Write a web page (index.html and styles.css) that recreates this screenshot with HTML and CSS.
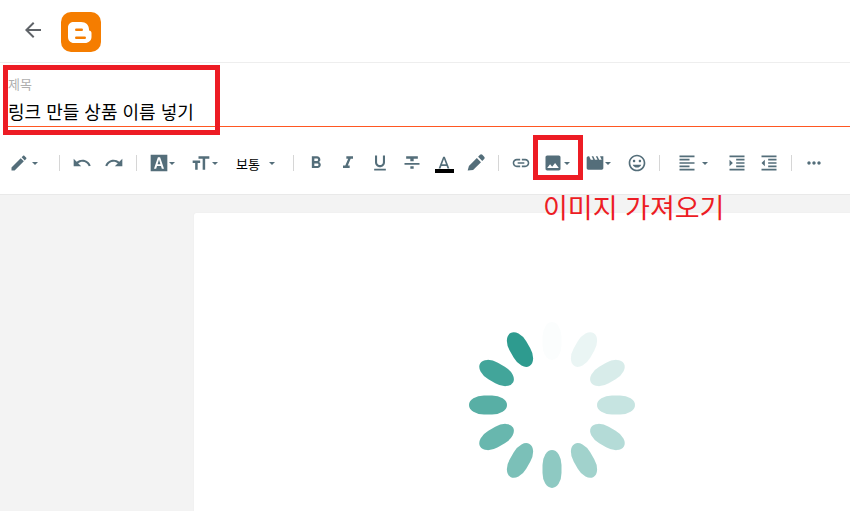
FILE: index.html
```html
<!DOCTYPE html>
<html lang="ko">
<head>
    <meta charset="UTF-8">
    <title>Blogger</title>
    <link rel="stylesheet" href="styles.css">
</head>
<body>
    <div class="header">
        <svg class="back" viewBox="0 0 24 24"><path d="M20 11H7.83l5.59-5.59L12 4l-8 8 8 8 1.41-1.41L7.83 13H20v-2z"/></svg>
        <svg class="logo" viewBox="0 0 40 40">
            <rect width="40" height="40" rx="10" fill="#f57d00"/>
            <path d="M14 10h6c5 0 8 3 8 7.500v1c1.500 0 2.500 1 2.500 2.500v4c0 3.500-3 6-6.500 6h-11c-3.500 0-6-2.500-6-6v-9.500c0-3.500 2.500-5.500 6-5.500z" fill="#fff"/>
            <rect x="14" y="16.500" width="8" height="2.500" rx="1.250" fill="#f57d00"/>
            <rect x="14" y="24.500" width="11" height="2.500" rx="1.250" fill="#f57d00"/>
        </svg>
    </div>

    <div class="title-box">
        <div class="title-label">제목</div>
        <div class="title-text">링크 만들 상품 이름 넣기</div>
    </div>

    <div class="toolbar">
        <span class="btn btn-pencil"><svg viewBox="0 0 24 24"><path d="M3 17.250V21h3.750L17.810 9.940l-3.750-3.750L3 17.250zM20.710 7.040c.39-.39.39-1.020 0-1.410l-2.340-2.340c-.39-.39-1.020-.39-1.410 0l-1.830 1.830 3.750 3.750 1.830-1.830z"/></svg><i class="caret"></i></span>
        <span class="sep"></span>
        <span class="btn"><svg viewBox="0 0 24 24"><path d="M12.500 8c-2.650 0-5.050.99-6.900 2.600L2 7v9h9l-3.620-3.620c1.390-1.160 3.160-1.880 5.120-1.880 3.540 0 6.550 2.310 7.600 5.500l2.370-.78C21.080 11.030 17.150 8 12.500 8z"/></svg></span>
        <span class="btn"><svg viewBox="0 0 24 24"><path d="M18.400 10.600C16.550 8.990 14.150 8 11.500 8c-4.650 0-8.580 3.030-9.960 7.220L3.900 16c1.050-3.190 4.050-5.500 7.600-5.500 1.950 0 3.730.72 5.120 1.880L13 16h9V7l-3.600 3.600z"/></svg></span>
        <span class="sep"></span>
        <span class="btn btn-back"><svg viewBox="0 0 24 24"><path fill-rule="evenodd" d="M2 2h20v20H2zM10.700 5 6 19h2.600l1-3.300h4.800l1 3.300H18L13.300 5zM10.300 13.500h3.400L12 7.900z"/></svg><i class="caret"></i></span>
        <span class="btn btn-fsize"><svg viewBox="0 0 24 24"><path d="M9 4h13v3h-5v13h-3V7H9zM2 9h9v3H8v8H5v-8H2z"/></svg><i class="caret"></i></span>
        <span class="btn size-select">보통<i class="caret"></i></span>
        <span class="sep"></span>
        <span class="btn"><svg viewBox="0 0 24 24"><path d="M15.600 10.790c.97-.67 1.650-1.770 1.650-2.790 0-2.260-1.750-4-4-4H7v14h7.040c2.090 0 3.710-1.700 3.710-3.790 0-1.520-.86-2.820-2.150-3.420zM10 6.500h3c.83 0 1.500.67 1.500 1.500s-.67 1.500-1.500 1.500h-3v-3zm3.500 9H10v-3h3.500c.83 0 1.500.67 1.500 1.500s-.67 1.500-1.500 1.500z"/></svg></span>
        <span class="btn"><svg viewBox="0 0 24 24"><path d="M10 4v3h2.210l-3.420 8H6v3h8v-3h-2.210l3.420-8H18V4z"/></svg></span>
        <span class="btn"><svg viewBox="0 0 24 24"><path d="M12 17c3.310 0 6-2.690 6-6V3h-2.500v8c0 1.930-1.570 3.500-3.500 3.500S8.500 12.930 8.500 11V3H6v8c0 3.310 2.690 6 6 6zm-7 2v2h14v-2H5z"/></svg></span>
        <span class="btn"><svg viewBox="0 0 24 24"><path d="M10 19h4v-3h-4v3zM5 4v3h5v3h4V7h5V4H5zM3 14h18v-2H3v2z"/></svg></span>
        <span class="btn color-a"><svg viewBox="0 0 24 24"><path d="M11 1 5.500 15h2.250l1.120-3h6.250l1.120 3h2.250L13 1h-2zm-1.380 9L12 3.670 14.380 10H9.620z"/></svg><i class="color-bar"></i></span>
        <span class="btn"><svg viewBox="0 0 24 24"><path d="M2 21l1.500-5.500 9.500-9.500 5 5-9.500 9.500zM14.500 4.500l2.300-2.300c.8-.8 2-.8 2.800 0l2.200 2.200c.8.8.8 2 0 2.800L19.500 9.500z"/></svg></span>
        <span class="sep"></span>
        <span class="btn"><svg viewBox="0 0 24 24"><path d="M3.900 12c0-1.710 1.390-3.100 3.100-3.100h4V7H7c-2.760 0-5 2.240-5 5s2.240 5 5 5h4v-1.900H7c-1.710 0-3.100-1.390-3.100-3.100zM8 13h8v-2H8v2zm9-6h-4v1.900h4c1.710 0 3.100 1.390 3.100 3.100s-1.390 3.100-3.100 3.100h-4V17h4c2.760 0 5-2.240 5-5s-2.240-5-5-5z"/></svg></span>
        <span class="btn btn-image"><svg viewBox="0 0 24 24"><path d="M21 19V5c0-1.100-.9-2-2-2H5c-1.100 0-2 .9-2 2v14c0 1.100.9 2 2 2h14c1.100 0 2-.9 2-2zM8.500 13.500l2.500 3.010L14.500 12l4.500 6H5l3.500-4.500z"/></svg><i class="caret"></i></span>
        <span class="btn btn-video"><svg viewBox="0 0 24 24"><path d="M18 4l2 4h-3l-2-4h-2l2 4h-3l-2-4H8l2 4H7L5 4H4c-1.100 0-1.990.9-1.990 2L2 18c0 1.100.9 2 2 2h16c1.100 0 2-.9 2-2V4h-4z"/></svg><i class="caret"></i></span>
        <span class="btn"><svg viewBox="0 0 24 24"><path d="M11.990 2C6.470 2 2 6.480 2 12s4.470 10 9.990 10C17.520 22 22 17.520 22 12S17.520 2 11.990 2zM12 20c-4.420 0-8-3.580-8-8s3.580-8 8-8 8 3.580 8 8-3.580 8-8 8zm3.500-9c.83 0 1.500-.67 1.500-1.500S16.330 8 15.500 8 14 8.670 14 9.500s.67 1.500 1.500 1.500zm-7 0c.83 0 1.500-.67 1.500-1.500S9.330 8 8.500 8 7 8.670 7 9.500 7.670 11 8.500 11zm3.500 6.500c2.330 0 4.310-1.460 5.110-3.500H6.890c.8 2.040 2.780 3.500 5.110 3.500z"/></svg></span>
        <span class="sep"></span>
        <span class="btn btn-align"><svg viewBox="0 0 24 24"><path d="M15 15H3v2h12v-2zm0-8H3v2h12V7zM3 13h18v-2H3v2zm0 8h18v-2H3v2zM3 3v2h18V3H3z"/></svg><i class="caret"></i></span>
        <span class="btn"><svg viewBox="0 0 24 24"><path d="M3 21h18v-2H3v2zM3 8v8l4-4-4-4zm8 9h10v-2H11v2zM3 3v2h18V3H3zm8 6h10V7H11v2zm0 4h10v-2H11v2z"/></svg></span>
        <span class="btn"><svg viewBox="0 0 24 24"><path d="M11 17h10v-2H11v2zm-8-5l4 4V8l-4 4zm0 9h18v-2H3v2zM3 3v2h18V3H3zm8 6h10V7H11v2zm0 4h10v-2H11v2z"/></svg></span>
        <span class="sep"></span>
        <span class="btn"><svg viewBox="0 0 24 24"><path d="M6 10c-1.100 0-2 .9-2 2s.9 2 2 2 2-.9 2-2-.9-2-2-2zm12 0c-1.100 0-2 .9-2 2s.9 2 2 2 2-.9 2-2-.9-2-2-2zm-6 0c-1.100 0-2 .9-2 2s.9 2 2 2 2-.9 2-2-.9-2-2-2z"/></svg></span>
    </div>

    <div class="editor">
        <div class="page">
            <svg class="spinner" viewBox="-85 -85 170 170">
                <rect class="s0" x="-9.500" y="-83" width="19" height="38" rx="9.500" ry="15"/>
                <rect class="s1" x="-9.500" y="-83" width="19" height="38" rx="9.500" ry="15" transform="rotate(30)"/>
                <rect class="s2" x="-9.500" y="-83" width="19" height="38" rx="9.500" ry="15" transform="rotate(60)"/>
                <rect class="s3" x="-9.500" y="-83" width="19" height="38" rx="9.500" ry="15" transform="rotate(90)"/>
                <rect class="s4" x="-9.500" y="-83" width="19" height="38" rx="9.500" ry="15" transform="rotate(120)"/>
                <rect class="s5" x="-9.500" y="-83" width="19" height="38" rx="9.500" ry="15" transform="rotate(150)"/>
                <rect class="s6" x="-9.500" y="-83" width="19" height="38" rx="9.500" ry="15" transform="rotate(180)"/>
                <rect class="s7" x="-9.500" y="-83" width="19" height="38" rx="9.500" ry="15" transform="rotate(210)"/>
                <rect class="s8" x="-9.500" y="-83" width="19" height="38" rx="9.500" ry="15" transform="rotate(240)"/>
                <rect class="s9" x="-9.500" y="-83" width="19" height="38" rx="9.500" ry="15" transform="rotate(270)"/>
                <rect class="s10" x="-9.500" y="-83" width="19" height="38" rx="9.500" ry="15" transform="rotate(300)"/>
                <rect class="s11" x="-9.500" y="-83" width="19" height="38" rx="9.500" ry="15" transform="rotate(330)"/>
            </svg>
        </div>
    </div>

    <!-- annotations drawn on top of the screenshot -->
    <div class="mark mark-title"></div>
    <div class="mark mark-image"></div>
    <div class="note">이미지 가져오기</div>
</body>
</html>
```

FILE: styles.css
```css
* {
    margin: 0;
    padding: 0;
    box-sizing: border-box;
}
html, body {
    height: 100%;
    overflow: hidden;
}
body {
    position: relative;
    display: flex;
    flex-direction: column;
    font-family: "Noto Sans CJK KR", "Noto Sans", sans-serif;
    background: #fff;
    color: #000;
}
.header {
    height: 63px;
    flex: none;
    display: flex;
    align-items: center;
    padding-left: 21px;
    border-bottom: 1px solid #eee;
}
.back {
    width: 24px;
    height: 24px;
    margin-bottom: 2px;
    fill: #5f6368;
}
.logo {
    width: 40px;
    height: 40px;
    margin: 2px 0 0 16px;
}
.title-box {
    height: 64px;
    flex: none;
    margin-left: 8px;
    border-bottom: 1px solid #ff5722;
}
.title-label {
    padding-top: 12px;
    font-size: 13px;
    line-height: 18px;
    color: #b0b0b0;
}
.title-text {
    padding-top: 6px;
    font-size: 18px;
    line-height: 24px;
}
.toolbar {
    height: 68px;
    flex: none;
    display: flex;
    align-items: center;
    padding: 5px 0 0 9px;
    border-bottom: 1px solid #e9e9e9;
}
.btn {
    width: 32px;
    height: 32px;
    flex: none;
    display: flex;
    align-items: center;
    justify-content: center;
    font-size: 13px;
}
.btn svg {
    width: 20px;
    height: 20px;
    fill: #546e7a;
    flex: none;
}
.caret {
    flex: none;
    width: 0;
    height: 0;
    margin-top: 1px;
    border-left: 3.500px solid transparent;
    border-right: 3.500px solid transparent;
    border-top: 3px solid #546e7a;
}
.btn-pencil, .btn-back, .btn-fsize, .btn-image, .btn-video, .btn-align, .size-select {
    justify-content: flex-start;
}
.btn-pencil { width: 44px; }
.btn-pencil .caret { margin-left: 3px; }
.btn-back { width: 42px; padding-left: 6px; }
.btn-fsize { width: 41px; padding-left: 6px; }
.btn-fsize .caret { margin-left: 1px; }
.size-select { width: 61px; padding-left: 10px; }
.size-select .caret { margin-left: 9px; }
.btn-image { width: 41px; padding-left: 6px; }
.btn-image .caret { margin-left: 1px; }
.btn-video { width: 43px; padding-left: 7px; }
.btn-align { width: 55px; padding-left: 11px; }
.btn-align .caret { margin-left: 5px; }
.sep {
    width: 1px;
    height: 16px;
    flex: none;
    margin: 0 6px;
    background: #d6d6d6;
}
.color-a {
    flex-direction: column;
    padding-top: 3px;
}
.color-bar {
    width: 19px;
    height: 4px;
    flex: none;
    background: #000;
    margin-top: -7px;
}
.editor {
    flex: 1;
    background: #f3f3f3;
    padding: 18px 0 0 194px;
    overflow: hidden;
}
.page {
    height: 320px;
    padding: 107px 0 0 273px;
    background: #fff;
    border-radius: 2px 0 0 0;
    box-shadow: 0 0 1px #ddd;
}
.spinner {
    display: block;
    width: 170px;
    height: 170px;
    fill: #2e9b8f;
}
.s0 { opacity: .02; }
.s1 { opacity: .1; }
.s2 { opacity: .19; }
.s3 { opacity: .27; }
.s4 { opacity: .36; }
.s5 { opacity: .45; }
.s6 { opacity: .54; }
.s7 { opacity: .63; }
.s8 { opacity: .72; }
.s9 { opacity: .8; }
.s10 { opacity: .9; }
.s11 { opacity: 1; }
.mark {
    position: absolute;
    border: 5px solid #ed1c24;
}
.mark-title {
    left: 3px;
    top: 65px;
    width: 217px;
    height: 70px;
}
.mark-image {
    left: 533px;
    top: 135px;
    width: 50px;
    height: 45px;
}
.note {
    position: absolute;
    left: 543px;
    top: 188px;
    font-size: 27px;
    line-height: 38px;
    color: #ed1c24;
    white-space: nowrap;
}
```
